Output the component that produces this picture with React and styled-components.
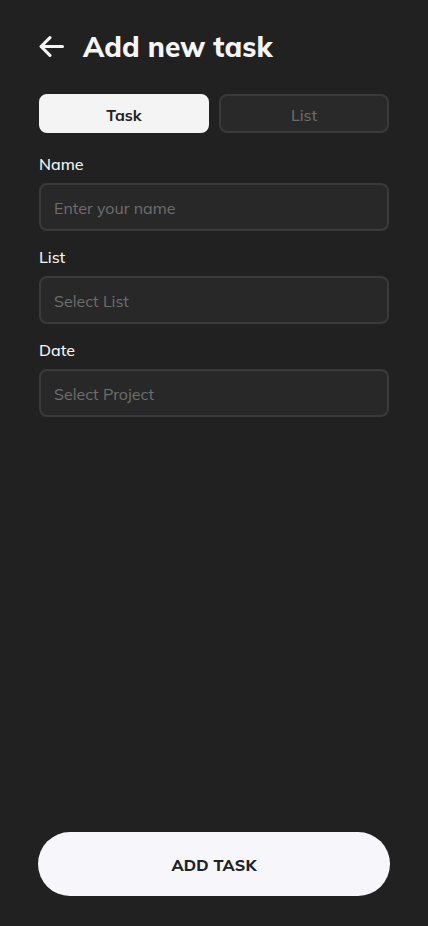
import React, { useState } from 'react';
import styled, { createGlobalStyle } from 'styled-components';

const fontStyle = 'Mulish, Lato, "Noto Sans", sans-serif';

const Global = createGlobalStyle`
  html, body {
    margin: 0;
    padding: 0;
    background: #212121;
  }
  * { box-sizing: border-box; }
`;

const Page = styled.div`
  display: flex;
  flex-direction: column;
  min-height: 926px;
  padding: 28px 38px 30px 39px;
  background: #212121;
  font-family: ${fontStyle};
  color: #f5f5f7;
`;

const Header = styled.div`
  display: flex;
  align-items: center;
  gap: 19px;
  height: 36px;
`;

const BackButton = styled.button`
  display: flex;
  align-items: center;
  justify-content: center;
  background: none;
  border: none;
  padding: 0;
  width: 25px;
  height: 25px;
  color: #f5f5f7;
`;

const Title = styled.h1`
  margin: 0;
  font-size: 28px;
  font-weight: 800;
  letter-spacing: 0.1px;
`;

const Tabs = styled.div`
  display: grid;
  grid-template-columns: 1fr 1fr;
  gap: 10px;
  margin-top: 30px;
  margin-right: 1px;
`;

const Tab = styled.button`
  height: 39px;
  padding: 2px 0 0;
  border-radius: 8px;
  font-family: ${fontStyle};
  font-size: 16px;
  font-weight: ${p => (p.$active ? 700 : 500)};
  background: ${p => (p.$active ? '#f4f4f4' : '#292929')};
  color: ${p => (p.$active ? '#222' : '#6a6a6a')};
  border: 2px solid ${p => (p.$active ? '#f4f4f4' : '#3a3a3a')};
`;

const Field = styled.div`
  display: flex;
  flex-direction: column;
  margin-top: ${p => (p.$first ? '21px' : '16px')};
  margin-right: 1px;
`;

const Label = styled.label`
  font-size: 16px;
  font-weight: 500;
  line-height: 20px;
  margin-bottom: 9px;
  color: #f5f5f7;
`;

const Input = styled.input`
  height: 48px;
  border-radius: 8px;
  border: 2px solid #3a3a3a;
  background: #282828;
  padding: 2px 13px 0;
  font-family: ${fontStyle};
  font-size: 16px;
  color: #eee;
  outline: none;
  &::placeholder {
    color: #6e6e6e;
  }
`;

const Submit = styled.button`
  margin-top: auto;
  margin-left: -1px;
  height: 64px;
  padding-top: 2px;
  border-radius: 32px;
  border: none;
  background: #f7f7fb;
  color: #222;
  font-family: ${fontStyle};
  font-size: 16px;
  font-weight: 800;
  letter-spacing: 0.2px;
`;

const ArrowLeft = () => (
  <svg width="25" height="25" viewBox="0 0 24 24" fill="none" stroke="currentColor" strokeWidth="3" strokeLinecap="round" strokeLinejoin="round">
    <path d="M22.5 12H2.5" />
    <path d="M10.5 3.5L2 12l8.5 8.5" />
  </svg>
);

export default function App() {
  const [tab, setTab] = useState('task');
  return (
    <>
      <Global />
      <Page>
        <Header>
          <BackButton><ArrowLeft /></BackButton>
          <Title>Add new task</Title>
        </Header>
        <Tabs>
          <Tab $active={tab === 'task'} onClick={() => setTab('task')}>Task</Tab>
          <Tab $active={tab === 'list'} onClick={() => setTab('list')}>List</Tab>
        </Tabs>
        <Field $first>
          <Label>Name</Label>
          <Input placeholder="Enter your name" />
        </Field>
        <Field>
          <Label>List</Label>
          <Input placeholder="Select List" />
        </Field>
        <Field>
          <Label>Date</Label>
          <Input placeholder="Select Project" />
        </Field>
        <Submit>ADD TASK</Submit>
      </Page>
    </>
  );
}
